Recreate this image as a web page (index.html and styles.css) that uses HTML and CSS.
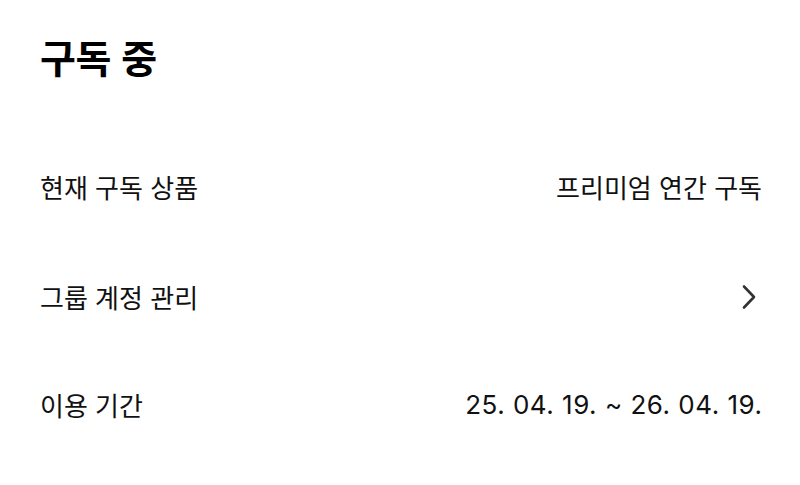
FILE: index.html
```html
<!DOCTYPE html>
<html lang="ko">
<head>
<meta charset="utf-8">
<link rel="stylesheet" href="styles.css">
</head>
<body>
<main class="page">
  <h1 class="title">구독 중</h1>
  <ul class="list">
    <li class="row">
      <span class="label">현재 구독 상품</span>
      <span class="value">프리미엄 연간 구독</span>
    </li>
    <li class="row">
      <span class="label">그룹 계정 관리</span>
      <svg class="chevron" width="16" height="26" viewBox="0 0 16 26" aria-hidden="true">
        <path d="M3 2.5 L13 13 L3 23.5" fill="none" stroke="#333" stroke-width="2.6" stroke-linecap="round" stroke-linejoin="round"/>
      </svg>
    </li>
    <li class="row">
      <span class="label">이용 기간</span>
      <span class="value num">25. 04. 19. ~ 26. 04. 19.</span>
    </li>
  </ul>
</main>
</body>
</html>
```

FILE: styles.css
```css
html, body {
  margin: 0;
  padding: 0;
  background: #ffffff;
}
body {
  font-family: "Noto Sans CJK KR", "Noto Sans", sans-serif;
  color: #111111;
  width: 800px;
  height: 485px;
  overflow: hidden;
}
.page {
  padding: 0 38px 0 40px;
}
.title {
  margin: 0;
  height: 132px;
  display: flex;
  align-items: center;
  padding-bottom: 20px;
  box-sizing: border-box;
  font-size: 39px;
  font-weight: 700;
  letter-spacing: -0.5px;
  color: #000;
}
.list {
  list-style: none;
  margin: 0;
  padding: 0;
}
.row {
  height: 110px;
  display: flex;
  align-items: center;
  justify-content: space-between;
  font-size: 26px;
  line-height: 1;
}
.row:last-child {
  height: 106px;
}
.label, .value {
  color: #111;
}
.num {
  font-family: "Inter", "Noto Sans CJK KR", sans-serif;
  font-size: 26px;
  letter-spacing: 0.5px;
  margin-right: -0.5px;
}
.chevron {
  margin-right: 5px;
}
```
